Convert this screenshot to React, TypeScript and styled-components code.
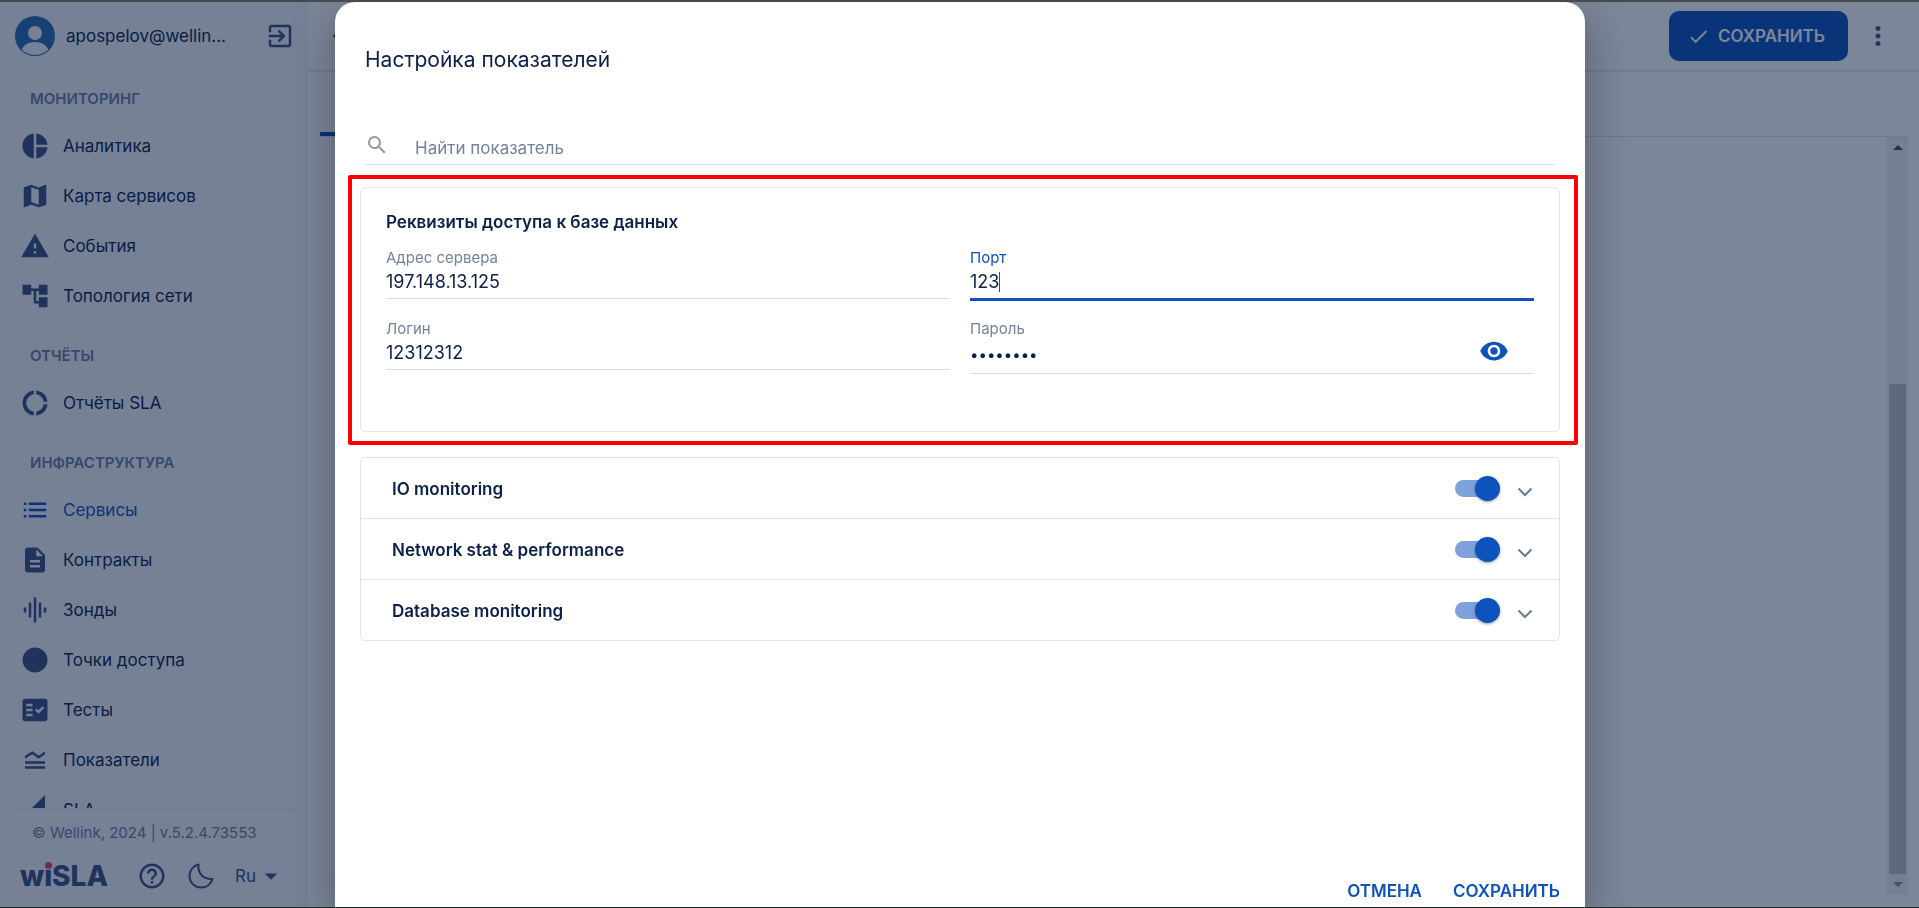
import React, { useState } from "react";
import styled, { createGlobalStyle, css } from "styled-components";
import {
  MdAccountTree,
  MdArrowBack,
  MdArrowDropDown,
  MdCheck,
  MdCircle,
  MdDescription,
  MdDonutLarge,
  MdExitToApp,
  MdFactCheck,
  MdGraphicEq,
  MdHelpOutline,
  MdLegendToggle,
  MdMap,
  MdMoreVert,
  MdPieChart,
  MdSearch,
  MdVisibility,
  MdWarning,
} from "react-icons/md";

const color = {
  primary: "#0d52bd",
  text: "#0c2149",
  icon: "#3a5080",
  muted: "#74829c",
  caption: "#6c7c9c",
  border: "#e3e4e7",
  line: "#dcdde3",
};

const GlobalStyle = createGlobalStyle`
  *, *::before, *::after { box-sizing: border-box; }
  body {
    margin: 0;
    overflow: hidden;
    font-family: Inter, "Liberation Sans", sans-serif;
    font-size: 17px;
    line-height: 24px;
    color: ${color.text};
  }
  button, input, select { font: inherit; color: inherit; }
  button { border: 0; padding: 0; background: none; cursor: pointer; }
  a { color: inherit; text-decoration: none; }
  h1, h2, p, ul { margin: 0; padding: 0; font-size: inherit; font-weight: inherit; }
`;

const Page = styled.div`
  display: flex;
  height: 100vh;
  border-top: 2px solid #49484f;
  border-bottom: 1px solid #1c2b2a;
`;

/* Sidebar */

const Sidebar = styled.aside`
  flex: 0 0 308px;
  display: flex;
  flex-direction: column;
  background: #f2f5f9;
`;

const UserBar = styled.div`
  display: flex;
  align-items: center;
  gap: 11px;
  padding: 14px 12px 14px 15px;
`;

const UserName = styled.span`
  flex: 0 0 188px;
`;

const IconButton = styled.button`
  display: inline-flex;
  align-items: center;
  justify-content: center;
  color: ${color.icon};
`;

const Nav = styled.nav`
  flex: 1 1 0;
  min-height: 0;
  overflow: hidden;
`;

const NavGroup = styled.section`
  padding-bottom: 6px;
`;

const NavTitle = styled.h2`
  height: 55px;
  padding: 17px 30px 14px;
  font-size: 15px;
  font-weight: 600;
  color: ${color.caption};
`;

const NavList = styled.ul`
  list-style: none;
  margin-top: -4px;
`;

const NavLink = styled.a<{ $active?: boolean }>`
  display: flex;
  align-items: center;
  gap: 13px;
  height: 50px;
  padding-left: 20px;
  color: ${(p) => (p.$active ? color.primary : color.text)};

  svg {
    flex: none;
    color: ${(p) => (p.$active ? color.primary : color.icon)};
  }
`;

const SidebarFooter = styled.footer`
  margin: 0 10px 0 18px;
  border-top: 2px solid #e7ebf1;
  padding: 11px 0 16px;
`;

const Copyright = styled.p`
  padding-left: 14px;
  font-size: 15px;
  color: ${color.caption};
`;

const Tools = styled.div`
  display: flex;
  align-items: center;
  height: 30px;
  margin-top: 16px;
`;

const Logo = styled.a`
  position: relative;
  width: 119px;
  padding-left: 2px;
  font-size: 28px;
  font-weight: 800;
  line-height: 30px;
  color: ${color.icon};
`;

const LogoDot = styled.span`
  position: absolute;
  top: 1px;
  left: 27px;
  width: 7px;
  height: 7px;
  border-radius: 50%;
  background: #e2455c;
`;

const MoonButton = styled(IconButton)`
  margin: 0 21px;
`;

const Language = styled.button`
  display: flex;
  align-items: center;
  color: ${color.icon};
`;

/* Main area */

const Main = styled.main`
  flex: 1;
  min-width: 0;
  display: flex;
  flex-direction: column;
  background: #fff;
`;

const Toolbar = styled.header`
  display: flex;
  align-items: center;
  gap: 15px;
  height: 70px;
  padding: 0 26px 0 20px;
  border-bottom: 2px solid #e7ebf1;
`;

const BackButton = styled(IconButton)`
  margin-right: auto;
`;

const SaveButton = styled.button`
  display: flex;
  align-items: center;
  gap: 8px;
  height: 50px;
  padding: 0 23px 0 18px;
  border-radius: 10px;
  background: ${color.primary};
  color: #fff;
  font-weight: 600;
`;

const Tabs = styled.div`
  display: flex;
  align-items: flex-end;
  height: 65px;
  margin: 0 11px 0 12px;
  border-bottom: 1px solid #dfe3ea;
`;

const Tab = styled.a`
  width: 160px;
  height: 4px;
  background: ${color.primary};
`;

const Content = styled.div`
  flex: 1;
  display: flex;
  justify-content: flex-end;
  margin: 0 11px 12px 12px;
`;

const ScrollTrack = styled.div`
  display: flex;
  flex-direction: column;
  align-items: center;
  justify-content: space-between;
  width: 21px;
  background: #f1f1f3;
`;

const ScrollThumb = styled.div`
  width: 17px;
  height: calc(100% - 268px);
  margin-top: auto;
  background: #c1c1c6;
`;

const ScrollArrow = styled.span<{ $down?: boolean }>`
  display: flex;
  align-items: center;
  justify-content: center;
  height: 21px;

  &::before {
    content: "";
    border: 5px solid transparent;
    ${(p) =>
      p.$down
        ? css`border-top-color: #8a8a90; border-bottom: 0;`
        : css`border-bottom-color: #505054; border-top: 0;`}
  }
`;

/* Dialog */

const Backdrop = styled.div`
  position: fixed;
  inset: 2px 0 1px;
  display: flex;
  justify-content: center;
  padding-left: 1px;
  overflow: hidden;
  background: rgba(8, 26, 62, 0.53);
`;

const Dialog = styled.section`
  display: flex;
  flex-direction: column;
  width: 100%;
  max-width: 1250px;
  height: 100%;
  border-radius: 20px 20px 0 0;
  background: #fff;
  box-shadow: 0 11px 15px -7px rgba(0, 0, 0, 0.2),
    0 24px 38px 3px rgba(0, 0, 0, 0.14), 0 9px 46px 8px rgba(0, 0, 0, 0.12);
`;

const DialogTitle = styled.h1`
  padding: 42px 30px 0;
  font-size: 21px;
  line-height: 32px;
`;

const SearchRow = styled.label`
  display: flex;
  align-items: center;
  gap: 26px;
  height: 36px;
  margin: 53px 30px 22px;
  padding: 2px 0 0;
  border-bottom: 1px solid ${color.line};
  color: #8e99ad;

  svg {
    margin-bottom: 6px;
  }
`;

const TextInput = styled.input<{ $fit?: boolean }>`
  flex: ${(p) => (p.$fit ? "none" : 1)};
  field-sizing: ${(p) => (p.$fit ? "content" : "fixed")};
  min-width: 0;
  height: 24px;
  padding: 0;
  border: 0;
  outline: 0;
  background: none;
  caret-color: ${(p) => (p.$fit ? "transparent" : color.primary)};

  &::placeholder {
    color: ${color.muted};
    opacity: 1;
  }
`;

const Caret = styled.span`
  width: 1px;
  height: 20px;
  background: ${color.primary};
`;

const Highlight = styled.div`
  position: relative;
  margin: 0 25px;

  &::after {
    content: "";
    position: absolute;
    inset: -12px -18px -13px -12px;
    border: 4px solid #ff0000;
    border-radius: 2px;
    pointer-events: none;
  }
`;

const Card = styled.div`
  height: 245px;
  padding: 22px 25px 0;
  border: 1px solid ${color.border};
  border-radius: 5px;
`;

const CardTitle = styled.h2`
  font-weight: 600;
`;

const Fields = styled.div`
  display: grid;
  grid-template-columns: 1fr 1fr;
  align-items: start;
  gap: 18px 20px;
  margin-top: 14px;
`;

const Field = styled.div<{ $active?: boolean }>`
  height: ${(p) => (p.$active ? 53 : 51)}px;
  border-bottom: ${(p) =>
    p.$active ? `3px solid ${color.primary}` : `1px solid ${color.line}`};

  label {
    display: block;
    font-size: 15px;
    line-height: 20px;
    color: ${(p) => (p.$active ? color.primary : color.muted)};
  }
`;

const PasswordField = styled(Field)`
  height: 55px;
`;

const InputRow = styled.div`
  display: flex;
  align-items: center;
  height: 28px;
  font-size: 18px;
`;

const PasswordRow = styled(InputRow)`
  height: 32px;
  font-size: 15px;
`;

const EyeButton = styled(IconButton)`
  margin: 0 25px 8px 0;
  color: ${color.primary};
`;

const Metrics = styled.ul`
  list-style: none;
  && {
    margin: 25px 25px 0;
  }
  border: 1px solid ${color.border};
  border-radius: 5px;
`;

const Metric = styled.li`
  display: flex;
  align-items: center;
  height: 60px;
  padding: 2px 26px 0 31px;
  font-weight: 600;

  & + & {
    height: 61px;
    border-top: 1px solid ${color.border};
  }
`;

const MetricName = styled.label`
  flex: 1;
`;

const Switch = styled.input`
  appearance: none;
  position: relative;
  width: 45px;
  height: 25px;
  margin: 0 17px 2px 0;
  cursor: pointer;

  &::before {
    content: "";
    position: absolute;
    inset: 4px 2px 4px 0;
    border-radius: 9px;
    background: #b9c0cc;
  }

  &::after {
    content: "";
    position: absolute;
    top: 0;
    left: 0;
    width: 25px;
    height: 25px;
    border-radius: 50%;
    background: #fff;
    box-shadow: 0 1px 3px rgba(0, 0, 0, 0.4);
  }

  &:checked::before {
    background: #7fa1dc;
  }

  &:checked::after {
    left: 20px;
    background: ${color.primary};
  }
`;

const Expand = styled(IconButton)`
  padding-top: 5px;
  color: #6c7a92;
`;

const Actions = styled.div`
  display: flex;
  justify-content: flex-end;
  gap: 31px;
  margin-top: auto;
  padding: 0 25px 4px;
`;

const Action = styled.button`
  font-weight: 600;
  color: ${color.primary};
`;

/* Icons */

const Avatar = () => (
  <svg width="40" height="40" viewBox="0 0 40 40" aria-hidden="true">
    <defs>
      <clipPath id="avatar">
        <circle cx="20" cy="20" r="19" />
      </clipPath>
    </defs>
    <circle cx="20" cy="20" r="20" fill="#2a6cb0" />
    <g clipPath="url(#avatar)" fill="#f2f5f9">
      <circle cx="20" cy="17" r="7" />
      <ellipse cx="20" cy="37" rx="14" ry="11" />
    </g>
  </svg>
);

const ListIcon = ({ size = 30 }: { size?: number }) => (
  <svg width={size} height={size} viewBox="0 0 24 24" fill="currentColor" aria-hidden="true">
    <path d="M3 6h2v2H3zM3 11h2v2H3zM3 16h2v2H3zM7 6h14v2H7zM7 11h14v2H7zM7 16h14v2H7z" />
  </svg>
);

const SlopeIcon = ({ size = 30 }: { size?: number }) => (
  <svg width={size} height={size} viewBox="0 0 24 24" fill="currentColor" aria-hidden="true">
    <path d="M20 0v20H0z" />
  </svg>
);

const MoonIcon = () => (
  <svg width="26" height="26" viewBox="0 0 26 26" fill="none" stroke="currentColor" strokeWidth="2" strokeLinejoin="round" aria-hidden="true">
    <path d="M10.500 1.500C5 3 1.500 7.500 1.500 13a11.500 11.500 0 0 0 11.500 11.500c5.500 0 10-3.500 11.500-8.500C16 16.500 9.500 11 10.500 1.500z" />
  </svg>
);

const ChevronIcon = () => (
  <svg width="16" height="10" viewBox="0 0 16 10" fill="none" stroke="currentColor" strokeWidth="2" aria-hidden="true">
    <path d="M1.500 1.500 8 8l6.500-6.500" />
  </svg>
);

const groups = [
  {
    title: "МОНИТОРИНГ",
    items: [
      { label: "Аналитика", Icon: MdPieChart },
      { label: "Карта сервисов", Icon: MdMap },
      { label: "События", Icon: MdWarning },
      { label: "Топология сети", Icon: MdAccountTree },
    ],
  },
  {
    title: "ОТЧЁТЫ",
    items: [{ label: "Отчёты SLA", Icon: MdDonutLarge }],
  },
  {
    title: "ИНФРАСТРУКТУРА",
    items: [
      { label: "Сервисы", Icon: ListIcon, active: true },
      { label: "Контракты", Icon: MdDescription },
      { label: "Зонды", Icon: MdGraphicEq },
      { label: "Точки доступа", Icon: MdCircle },
      { label: "Тесты", Icon: MdFactCheck },
      { label: "Показатели", Icon: MdLegendToggle },
      { label: "SLA", Icon: SlopeIcon },
    ],
  },
];

const metrics = ["IO monitoring", "Network stat & performance", "Database monitoring"];

export default function App() {
  const [showPassword, setShowPassword] = useState(false);

  return (
    <>
      <GlobalStyle />
      <Page>
        <Sidebar>
          <UserBar>
            <Avatar />
            <UserName>apospelov@wellin...</UserName>
            <IconButton aria-label="Выйти">
              <MdExitToApp size={30} />
            </IconButton>
          </UserBar>
          <Nav>
            {groups.map((group) => (
              <NavGroup key={group.title}>
                <NavTitle>{group.title}</NavTitle>
                <NavList>
                  {group.items.map(({ label, Icon, ...item }) => (
                    <li key={label}>
                      <NavLink href="#" $active={"active" in item}>
                        <Icon size={30} />
                        {label}
                      </NavLink>
                    </li>
                  ))}
                </NavList>
              </NavGroup>
            ))}
          </Nav>
          <SidebarFooter>
            <Copyright>© Wellink, 2024 | v.5.2.4.73553</Copyright>
            <Tools>
              <Logo href="#">
                wiSLA
                <LogoDot />
              </Logo>
              <IconButton aria-label="Помощь">
                <MdHelpOutline size={30} />
              </IconButton>
              <MoonButton aria-label="Тёмная тема">
                <MoonIcon />
              </MoonButton>
              <Language>
                Ru
                <MdArrowDropDown size={30} />
              </Language>
            </Tools>
          </SidebarFooter>
        </Sidebar>

        <Main>
          <Toolbar>
            <BackButton aria-label="Назад">
              <MdArrowBack size={28} />
            </BackButton>
            <SaveButton>
              <MdCheck size={23} />
              СОХРАНИТЬ
            </SaveButton>
            <IconButton aria-label="Ещё">
              <MdMoreVert size={30} />
            </IconButton>
          </Toolbar>
          <Tabs>
            <Tab href="#" aria-label="Показатели" />
          </Tabs>
          <Content>
            <ScrollTrack>
              <ScrollArrow />
              <ScrollThumb />
              <ScrollArrow $down />
            </ScrollTrack>
          </Content>
        </Main>
      </Page>

      <Backdrop>
        <Dialog role="dialog" aria-modal="true" aria-labelledby="dialog-title">
          <DialogTitle id="dialog-title">Настройка показателей</DialogTitle>
          <SearchRow>
            <MdSearch size={24} />
            <TextInput type="text" placeholder="Найти показатель" aria-label="Найти показатель" />
          </SearchRow>
          <Highlight>
            <Card>
              <CardTitle>Реквизиты доступа к базе данных</CardTitle>
              <Fields>
                <Field>
                  <label htmlFor="host">Адрес сервера</label>
                  <InputRow>
                    <TextInput id="host" defaultValue="197.148.13.125" />
                  </InputRow>
                </Field>
                <Field $active>
                  <label htmlFor="port">Порт</label>
                  <InputRow>
                    <TextInput id="port" defaultValue="123" $fit autoFocus />
                    <Caret />
                  </InputRow>
                </Field>
                <Field>
                  <label htmlFor="login">Логин</label>
                  <InputRow>
                    <TextInput id="login" defaultValue="12312312" />
                  </InputRow>
                </Field>
                <PasswordField>
                  <label htmlFor="password">Пароль</label>
                  <PasswordRow>
                    <TextInput
                      id="password"
                      type={showPassword ? "text" : "password"}
                      defaultValue="12345678"
                    />
                    <EyeButton
                      type="button"
                      aria-label="Показать пароль"
                      onClick={() => setShowPassword(!showPassword)}
                    >
                      <MdVisibility size={30} />
                    </EyeButton>
                  </PasswordRow>
                </PasswordField>
              </Fields>
            </Card>
          </Highlight>
          <Metrics>
            {metrics.map((name, index) => (
              <Metric key={name}>
                <MetricName htmlFor={`metric-${index}`}>{name}</MetricName>
                <Switch id={`metric-${index}`} type="checkbox" defaultChecked />
                <Expand aria-label="Развернуть">
                  <ChevronIcon />
                </Expand>
              </Metric>
            ))}
          </Metrics>
          <Actions>
            <Action>ОТМЕНА</Action>
            <Action>СОХРАНИТЬ</Action>
          </Actions>
        </Dialog>
      </Backdrop>
    </>
  );
}
